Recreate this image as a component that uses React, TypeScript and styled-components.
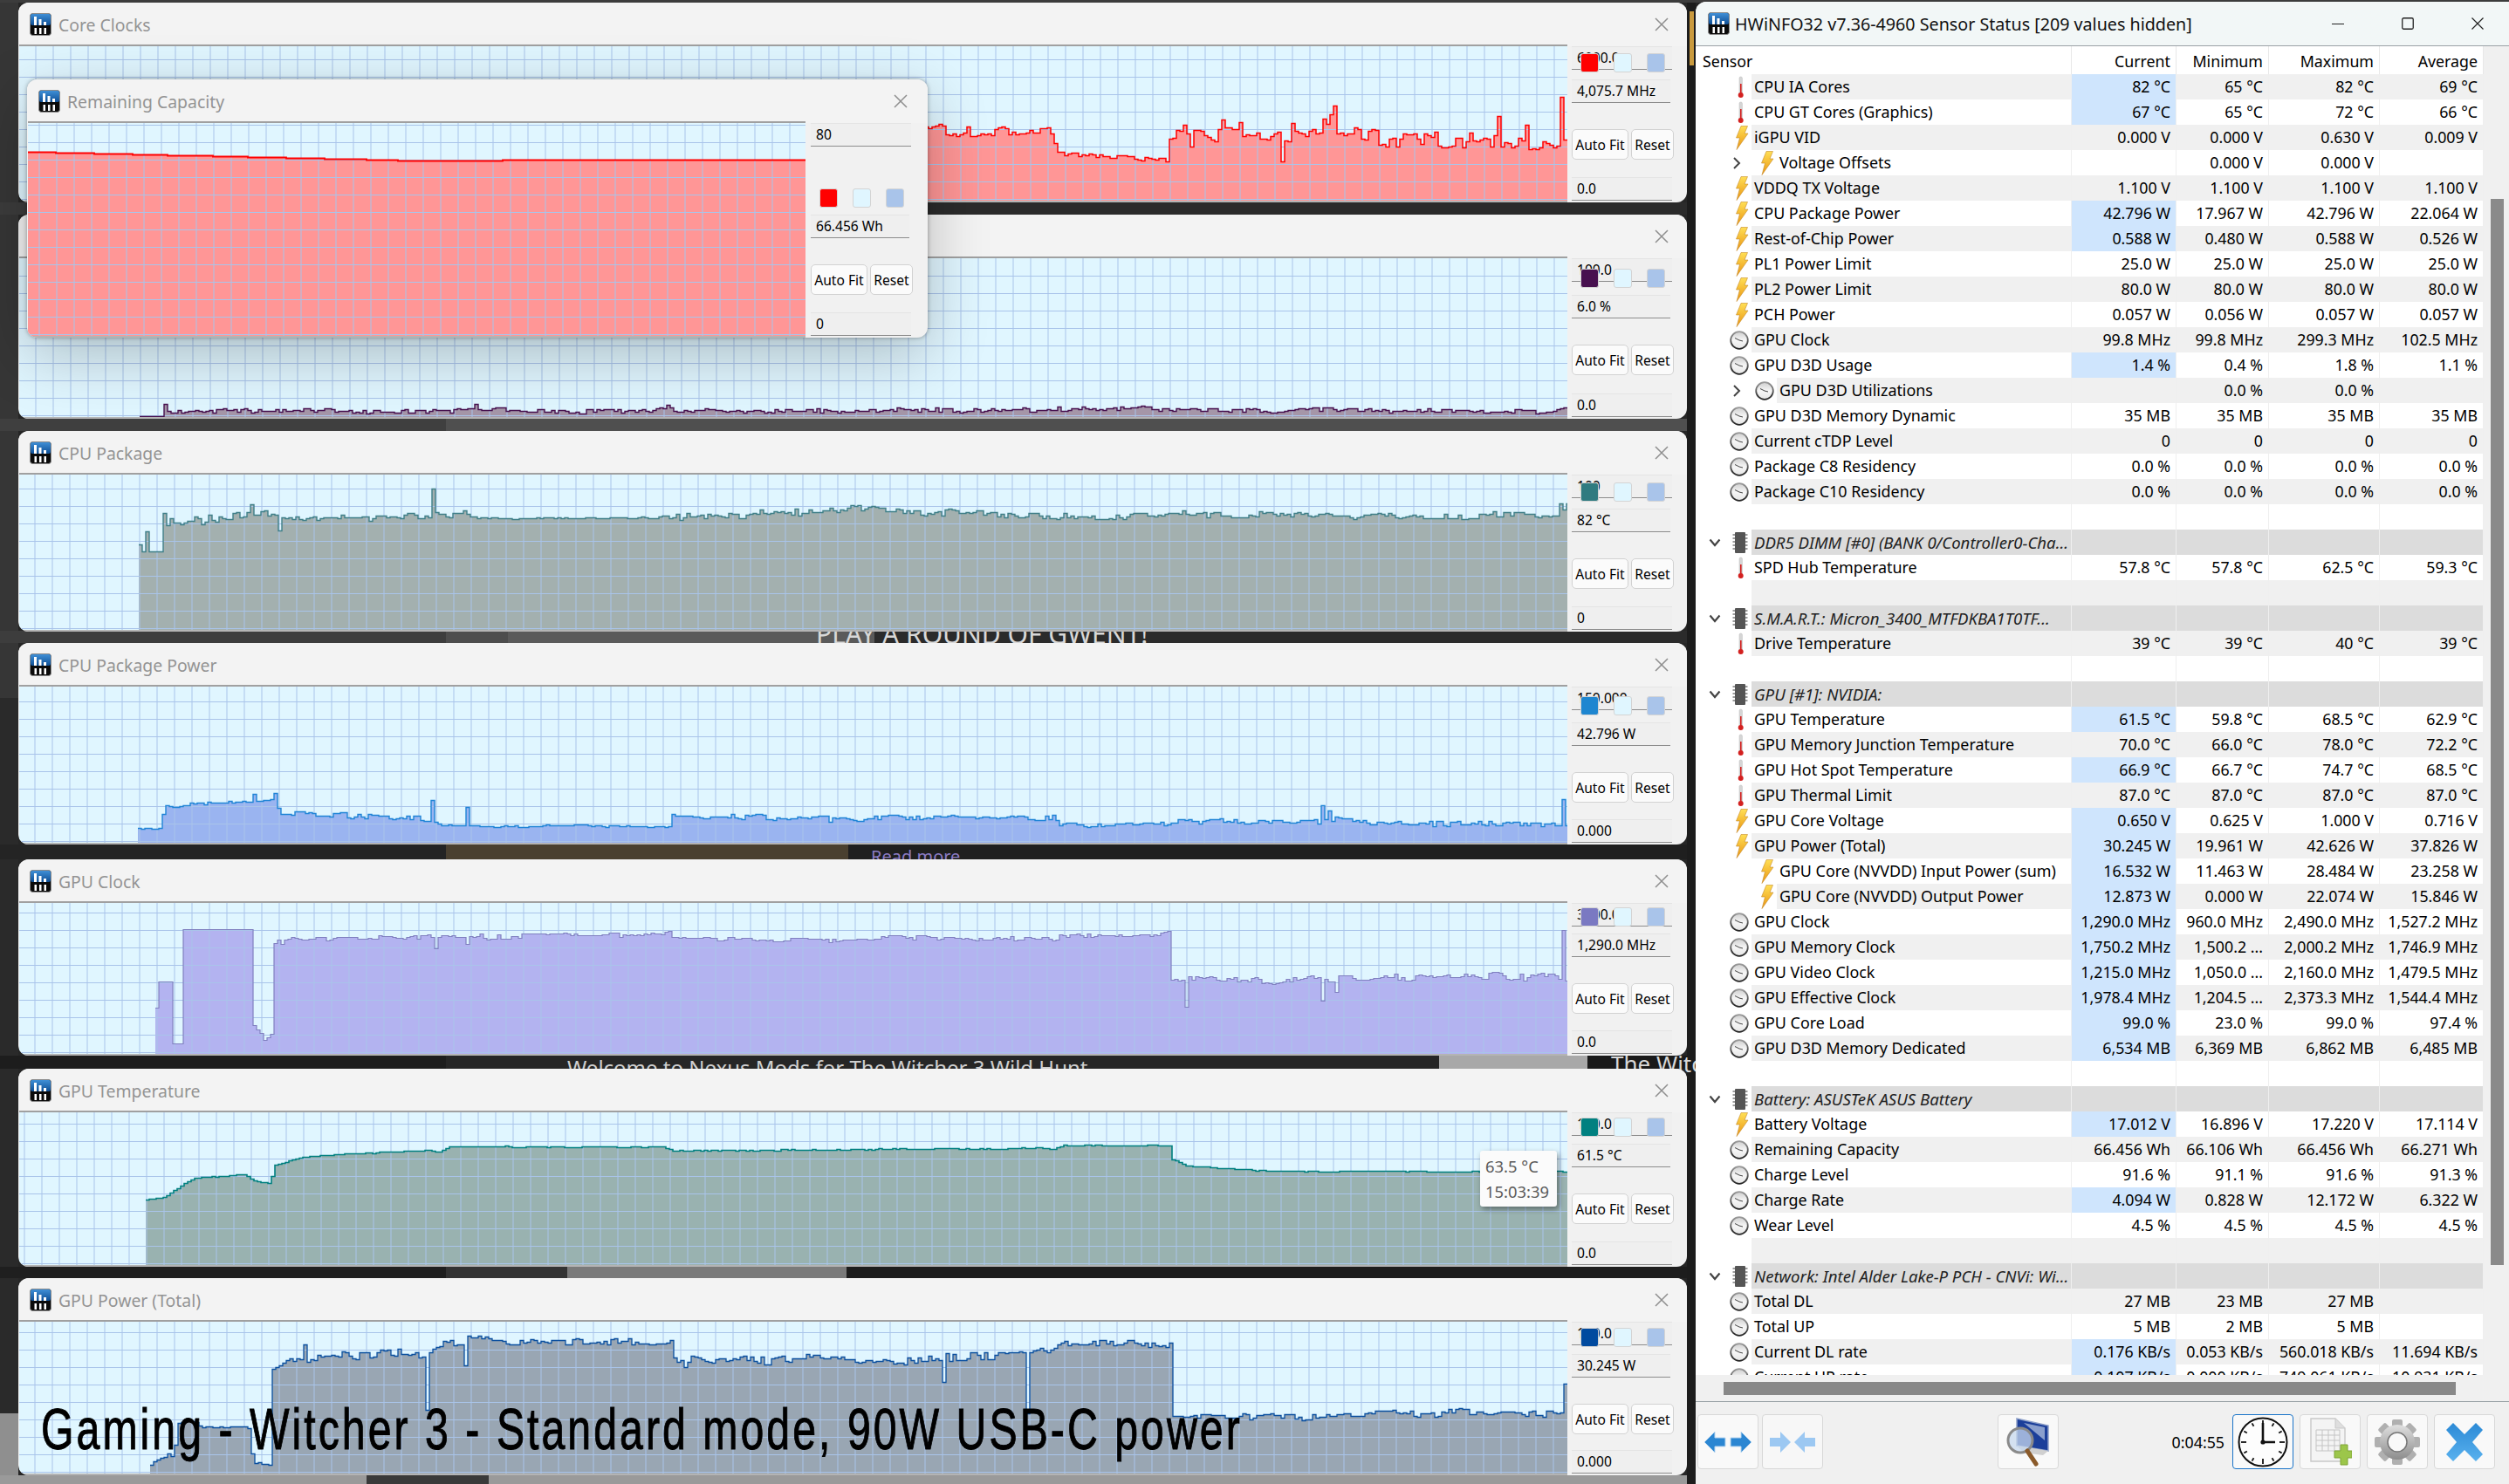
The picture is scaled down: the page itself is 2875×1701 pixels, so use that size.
import React from "react";
import styled, { createGlobalStyle } from "styled-components";

const UI = `"Noto Sans", "Liberation Sans", sans-serif`;

const block = (c: string, x: number, y: number, w: number, h: number) =>
  `linear-gradient(${c},${c}) ${x}px ${y}px / ${w}px ${h}px no-repeat`;

const backdrop = [
  block("#3c3c3c", 0, 0, 2875, 3),
  block("#c99a3e", 1936, 13, 5, 62),
  block("#3c3c3c", 0, 232, 511, 14),
  block("#2b2b2b", 511, 232, 1422, 14),
  block("#3f3f3f", 0, 480, 511, 14),
  block("#4f4f4f", 511, 480, 1422, 14),
  block("#3d3d3d", 0, 723, 511, 14),
  block("#4d4d4d", 511, 723, 71, 14),
  block("#5a5a5a", 582, 723, 420, 14),
  block("#2b2b2b", 1002, 723, 931, 14),
  block("#242424", 0, 968, 511, 17),
  block("#4a4030", 511, 968, 461, 17),
  block("#1f1f1f", 972, 968, 961, 17),
  block("#1d1d1d", 0, 1210, 511, 15),
  block("#262626", 511, 1210, 1138, 15),
  block("#a8a8a8", 1649, 1210, 170, 15),
  block("#1a1a1a", 1819, 1210, 114, 15),
  block("#1f1f1f", 0, 1452, 511, 13),
  block("#333333", 511, 1452, 139, 13),
  block("#7a7a7a", 650, 1452, 320, 13),
  block("#1d1d1d", 970, 1452, 963, 13),
  block("#3a3a3a", 420, 1691, 140, 10),
  block("#9a9a9a", 0, 1691, 1933, 10),
  block("#8f8f8f", 0, 1620, 21, 81),
  block("#2a2a2a", 0, 800, 21, 820),
  block("#363636", 0, 0, 21, 800),
  block("#1c1c1c", 1933, 0, 10, 1701),
].join(", ");

const Global = createGlobalStyle`
  html, body { margin: 0; padding: 0; background: #262626; }
  #root { width: 2875px; height: 1701px; }
`;

const Page = styled.div`
  position: relative;
  width: 2875px;
  height: 1701px;
  overflow: hidden;
  display: flex;
  align-items: flex-start;
  background: ${backdrop};
  font-family: ${UI};
  color: #000;
`;

const Behind = styled.span<{ $x: number; $y: number; $size: number; $color: string }>`
  position: absolute;
  left: ${(p) => p.$x}px;
  top: ${(p) => p.$y}px;
  font-size: ${(p) => p.$size}px;
  color: ${(p) => p.$color};
  line-height: 1;
  white-space: nowrap;
`;

const GraphColumn = styled.div`
  position: relative;
  z-index: 1;
  width: 1912px;
  margin-left: 21px;
  padding-top: 3px;
  display: flex;
  flex-direction: column;
`;

const GraphWindow = styled.section<{ $h: number; $gap: number }>`
  height: ${(p) => p.$h}px;
  margin-bottom: ${(p) => p.$gap}px;
  display: flex;
  flex-direction: column;
  background: #f1f1f1;
  border-radius: 12px;
  overflow: hidden;
`;

const FloatingWindow = styled.section`
  position: absolute;
  z-index: 2;
  left: 31px;
  top: 91px;
  width: 1032px;
  height: 296px;
  display: flex;
  flex-direction: column;
  background: #f1f1f1;
  border-radius: 12px;
  overflow: hidden;
  box-shadow: 0 20px 70px rgba(0, 0, 0, 0.24), 0 0 5px rgba(0, 0, 0, 0.35);
`;

const TitleBar = styled.header<{ $right: number }>`
  flex: 0 0 50px;
  height: 50px;
  box-sizing: border-box;
  display: flex;
  align-items: center;
  gap: 8px;
  padding: 0 ${(p) => p.$right}px 0 13px;
  background: #f3f3f3;
  font-size: 19.4px;
  color: #949494;
  white-space: nowrap;
`;

const CloseGlyph = styled.svg`
  margin-left: auto;
  width: 16px;
  height: 16px;
  flex: none;
`;

const Body = styled.div`
  flex: 1;
  min-height: 0;
  display: flex;
  align-items: stretch;
  padding-bottom: 2px;
`;

const ChartSvg = styled.svg`
  display: block;
  flex: none;
  margin-left: 1px;
  box-shadow: 0 -2px 0 #a0a0a0, 0 2px 0 #b4b4b4;
`;

const SidePanel = styled.div<{ $lead: number }>`
  flex: none;
  width: 118px;
  margin-left: ${(p) => p.$lead}px;
  display: flex;
  flex-direction: column;
  align-items: flex-start;
`;

const Field = styled.div<{ $w?: number; $top?: number; $auto?: boolean }>`
  width: ${(p) => p.$w ?? 115}px;
  height: 27px;
  flex: none;
  box-sizing: border-box;
  margin-top: ${(p) => (p.$auto ? "auto" : `${p.$top ?? 0}px`)};
  padding-left: 6px;
  background: #efefef;
  border-top: 1px solid #e4e4e4;
  border-bottom: 1px solid #8c8c8c;
  font-size: 15.6px;
  line-height: 25px;
  white-space: nowrap;
  overflow: hidden;
`;

const Swatches = styled.div<{ $top: number }>`
  position: relative;
  margin-top: ${(p) => p.$top}px;
  margin-left: 10px;
  display: flex;
  gap: 17px;
  flex: none;
`;

const Swatch = styled.i<{ $c: string }>`
  display: block;
  width: 19px;
  height: 20px;
  background: ${(p) => p.$c};
  border: 1px solid #d4d4d4;
  border-radius: 3px;
`;

const ButtonRow = styled.div<{ $top: number }>`
  display: flex;
  gap: 3px;
  margin-top: ${(p) => p.$top}px;
  flex: none;
`;

const FitButton = styled.button<{ $w: number }>`
  width: ${(p) => p.$w}px;
  height: 35px;
  padding: 0;
  box-sizing: border-box;
  background: #fbfbfb;
  border: 1px solid #d2d2d2;
  border-radius: 5px;
  font-family: ${UI};
  font-size: 15.6px;
  color: #000;
`;

const Tip = styled.div`
  position: absolute;
  z-index: 3;
  left: 1696px;
  top: 1319px;
  width: 88px;
  height: 64px;
  box-sizing: border-box;
  padding: 3px 0 0 6px;
  background: #fbfbfb;
  border-radius: 3px;
  box-shadow: 2px 3px 6px rgba(0, 0, 0, 0.4);
  color: #5a5a5a;
  font-size: 18.4px;
  line-height: 29px;
`;

const Caption = styled.div`
  position: absolute;
  z-index: 4;
  left: 47px;
  top: 1600px;
  font-family: "Liberation Sans", sans-serif;
  font-size: 67px;
  line-height: 75px;
  letter-spacing: 4.2px;
  color: #000;
  -webkit-text-stroke: 1px #000;
  white-space: nowrap;
  transform-origin: left top;
  transform: scaleX(0.72);
`;

/* ---------- sensor window ---------- */

const SensorWindow = styled.section`
  position: relative;
  z-index: 1;
  margin-left: 10px;
  margin-top: 2px;
  width: 932px;
  height: 1699px;
  display: flex;
  flex-direction: column;
  background: #f0f0f0;
  border-radius: 12px 0 0 0;
  overflow: hidden;
`;

const SensorTitle = styled.header`
  flex: 0 0 51px;
  box-sizing: border-box;
  display: flex;
  align-items: center;
  padding-left: 14px;
  gap: 6px;
  background: #f2f7f7;
  border-bottom: 1px solid #9aa2a6;
  font-size: 19.7px;
  color: #111;
  white-space: nowrap;
`;

const WindowControls = styled.div`
  margin-left: auto;
  display: flex;
  gap: 66px;
  padding-right: 29px;
  align-items: center;
`;

const TableArea = styled.div`
  flex: none;
  height: 1523px;
  display: flex;
`;

const Table = styled.div`
  width: 903px;
  background: #fff;
  overflow: hidden;
  flex: none;
`;

const HeaderRow = styled.div`
  height: 32px;
  display: grid;
  grid-template-columns: 431px 120px 106px 127px 119px;
  font-size: 17.8px;
  line-height: 34px;
`;

const HeaderCell = styled.div<{ $left?: boolean }>`
  box-sizing: border-box;
  padding: ${(p) => (p.$left ? "0 0 0 8px" : "0 6px 0 0")};
  text-align: ${(p) => (p.$left ? "left" : "right")};
  border-right: 1px solid #e8e8e8;
`;

const Row = styled.div`
  height: 29px;
  display: grid;
  grid-template-columns: 431px 120px 106px 127px 119px;
  font-size: 17.8px;
  line-height: 29px;
`;

const toneColor = { white: "#ffffff", gray: "#f0f0f0", group: "#dcdcdc" };
type Tone = keyof typeof toneColor;

const NameCell = styled.div`
  display: flex;
  min-width: 0;
  white-space: nowrap;
`;

const Gutter = styled.div<{ $w: number; $pad: number }>`
  flex: none;
  width: ${(p) => p.$w}px;
  box-sizing: border-box;
  padding-left: ${(p) => p.$pad}px;
  padding-right: 3px;
  display: flex;
  align-items: center;
  justify-content: space-between;
  background: #fff;
`;

const Name = styled.div<{ $tone: Tone }>`
  flex: 1;
  min-width: 0;
  padding-left: 3px;
  background: ${(p) => toneColor[p.$tone]};
  font-style: ${(p) => (p.$tone === "group" ? "italic" : "normal")};
  font-size: ${(p) => (p.$tone === "group" ? "18.6px" : "17.9px")};
  color: ${(p) => (p.$tone === "group" ? "#222" : "#000")};
  border-right: 1px solid #efefef;
  overflow: hidden;
`;

const Value = styled.div<{ $tone: Tone; $hl?: boolean }>`
  box-sizing: border-box;
  text-align: right;
  padding-right: 6px;
  white-space: nowrap;
  overflow: hidden;
  background: ${(p) => (p.$hl ? "#cfe5fd" : toneColor[p.$tone])};
  border-right: 1px solid #efefef;
`;

const ScrollTrack = styled.div`
  flex: 1;
  padding: 175px 6px 0 8px;
  background: #f0f0f0;
`;

const ScrollThumb = styled.div`
  height: 1222px;
  background: #8a8a8a;
`;

const HScroll = styled.div`
  flex: none;
  height: 31px;
  box-sizing: border-box;
  padding: 8px 0 0 32px;
  border-bottom: 1px solid #9aa2a6;
`;

const HThumb = styled.div`
  width: 839px;
  height: 15px;
  background: #888;
`;

const Footer = styled.footer`
  flex: none;
  display: flex;
  align-items: center;
  padding: 14px 16px 0 2px;
  gap: 4px;
`;

const ToolButton = styled.div<{ $focus?: boolean; $faded?: boolean; $lead?: number }>`
  width: 70px;
  height: 63px;
  flex: none;
  box-sizing: border-box;
  margin-left: ${(p) => p.$lead ?? 0}px;
  display: flex;
  align-items: center;
  justify-content: center;
  background: ${(p) => (p.$faded ? "#f7f7f7" : "#f9f9f9")};
  border: 1px solid ${(p) => (p.$focus ? "#1a74c8" : "#d8d8d8")};
  border-radius: 4px;
`;

const ToolRight = styled.div`
  margin-left: auto;
  display: flex;
  align-items: center;
  gap: 7px;
`;

const Elapsed = styled.span`
  font-size: 17.8px;
  margin-right: 2px;
`;

/* ---------- icons ---------- */

const AppIcon = () => (
  <svg width="25" height="26" viewBox="0 0 25 26" style={{ flex: "none" }}>
    <defs>
      <linearGradient id="appTop" x1="0" y1="0" x2="0" y2="1">
        <stop offset="0" stopColor="#3f8fd6" />
        <stop offset="1" stopColor="#0f4f95" />
      </linearGradient>
    </defs>
    <rect x="0.5" y="0.5" width="24" height="25" rx="3" fill="#0a0a0a" stroke="#8a8a8a" />
    <rect x="1" y="1" width="23" height="13" rx="2" fill="url(#appTop)" />
    <rect x="5" y="4" width="3" height="10" fill="#fff" />
    <rect x="10.5" y="7" width="3" height="7" fill="#fff" />
    <rect x="16" y="10" width="3" height="4" fill="#fff" />
    <rect x="5.5" y="17" width="2.5" height="7" fill="#fff" />
    <rect x="11" y="17" width="2.5" height="7" fill="#fff" />
    <rect x="16.5" y="17" width="2.5" height="7" fill="#fff" />
  </svg>
);

const CloseX = ({ c = "#8e8e8e" }: { c?: string }) => (
  <CloseGlyph viewBox="0 0 16 16">
    <path d="M1 1L15 15M15 1L1 15" stroke={c} strokeWidth="1.5" />
  </CloseGlyph>
);

const Thermo = () => (
  <svg width="20" height="26" viewBox="0 0 20 26">
    <rect x="9" y="1" width="3.4" height="21" rx="1.6" fill="#d6d6d6" stroke="#b8b8b8" strokeWidth="0.5" />
    <rect x="10" y="9" width="1.6" height="13" fill="#d3201f" />
    <circle cx="10.7" cy="22" r="3" fill="#d3201f" />
  </svg>
);

const Bolt = () => (
  <svg width="18" height="28" viewBox="0 0 18 28">
    <defs>
      <linearGradient id="boltFill" x1="0" y1="0" x2="0" y2="1">
        <stop offset="0" stopColor="#ffdf55" />
        <stop offset="1" stopColor="#ea9412" />
      </linearGradient>
    </defs>
    <path d="M9 0.5H16.5L13 9H17L4 27.5L7.5 14H3.5Z" fill="url(#boltFill)" stroke="#c48a2a" strokeWidth="0.6" />
  </svg>
);

const ClockIcon = () => (
  <svg width="22" height="24" viewBox="0 0 22 24">
    <defs>
      <linearGradient id="clockFace" x1="0" y1="0" x2="0" y2="1">
        <stop offset="0" stopColor="#cfcfcf" />
        <stop offset="0.5" stopColor="#f6f6f6" />
        <stop offset="1" stopColor="#e6e6e6" />
      </linearGradient>
      <linearGradient id="clockRing" x1="0" y1="0" x2="0" y2="1">
        <stop offset="0" stopColor="#9a9a9a" />
        <stop offset="1" stopColor="#222222" />
      </linearGradient>
    </defs>
    <circle cx="11" cy="12" r="9.8" fill="url(#clockFace)" stroke="url(#clockRing)" strokeWidth="1.8" />
    <path d="M11 12L6 9.5M11 12L15 13" stroke="#444" strokeWidth="1" />
  </svg>
);

const ChipIcon = () => (
  <svg width="20" height="26" viewBox="0 0 20 26">
    <rect x="4" y="1" width="12" height="24" rx="1" fill="#555" />
    {[3, 7, 11, 15, 19].map((y) => (
      <g key={y}>
        <rect x="1.5" y={y} width="2.5" height="2" fill="#9a9a9a" />
        <rect x="16" y={y} width="2.5" height="2" fill="#9a9a9a" />
      </g>
    ))}
  </svg>
);

const ChevDown = () => (
  <svg width="14" height="10" viewBox="0 0 14 10">
    <path d="M1.5 1.5L7 8L12.5 1.5" fill="none" stroke="#444" strokeWidth="2.2" />
  </svg>
);

const ChevRight = () => (
  <svg width="10" height="14" viewBox="0 0 10 14">
    <path d="M2 1L8 7L2 13" fill="none" stroke="#444" strokeWidth="2" />
  </svg>
);

const Arrows = ({ out }: { out: boolean }) => {
  const a = out ? "#2b86d2" : "#9cc8f2";
  return (
    <svg width="56" height="30" viewBox="0 0 56 30">
      {out ? (
        <>
          <path d="M1 15L13 3V10H25V20H13V27Z" fill={a} stroke="#bcd8f0" />
          <path d="M55 15L43 3V10H31V20H43V27Z" fill={a} stroke="#bcd8f0" />
        </>
      ) : (
        <>
          <path d="M26 15L14 3V10H2V20H14V27Z" fill={a} />
          <path d="M30 15L42 3V10H54V20H42V27Z" fill={a} />
        </>
      )}
    </svg>
  );
};

const ScanIcon = () => (
  <svg width="54" height="56" viewBox="0 0 54 56">
    <path d="M14 1L50 9V38L14 32Z" fill="#1c3f9a" stroke="#8ea0c8" strokeWidth="1.5" />
    <path d="M22 6L46 11V26Z" fill="#e6eef8" opacity="0.55" />
    <path d="M14 32L50 38L44 43L22 40Z" fill="#d0d0d0" />
    <circle cx="18" cy="26" r="14" fill="#c7d8ee" fillOpacity="0.75" stroke="#8a8a8a" strokeWidth="3" />
    <path d="M26 38L36 53" stroke="#8a5a2a" strokeWidth="5" strokeLinecap="round" />
  </svg>
);

const BigClock = () => (
  <svg width="58" height="58" viewBox="0 0 58 58">
    <circle cx="29" cy="29" r="27.5" fill="#fdfdfd" stroke="#111" strokeWidth="2" />
    {Array.from({ length: 12 }, (_, i) => {
      const t = (i * Math.PI) / 6;
      const l = i % 3 === 0 ? 19 : 21;
      return (
        <line
          key={i}
          x1={29 + l * Math.sin(t)}
          y1={29 - l * Math.cos(t)}
          x2={29 + 25 * Math.sin(t)}
          y2={29 - 25 * Math.cos(t)}
          stroke="#111"
          strokeWidth="1.8"
        />
      );
    })}
    <path d="M29 29V7M29 29H43" stroke="#111" strokeWidth="2.6" />
    <circle cx="29" cy="29" r="2.6" fill="#111" />
  </svg>
);

const SheetIcon = () => (
  <svg width="50" height="56" viewBox="0 0 50 56">
    <path d="M3 1H31L42 12V50H3Z" fill="#f4f4f4" stroke="#c8c8c8" strokeWidth="1.4" />
    <path d="M31 1V12H42" fill="#dedede" stroke="#c8c8c8" />
    {[14, 20, 26, 32, 38].map((y) => (
      <line key={y} x1="9" x2="36" y1={y} y2={y} stroke="#c4c4c4" />
    ))}
    {[9, 16, 23, 30, 36].map((x) => (
      <line key={x} x1={x} x2={x} y1="14" y2="38" stroke="#c4c4c4" />
    ))}
    <path d="M30 38H37V31H45V38H50V46H45V54H37V46H30Z" fill="#9cc64a" stroke="#7ea534" />
  </svg>
);

const Gear = () => {
  const teeth = Array.from({ length: 8 }, (_, i) => i * 45);
  return (
    <svg width="54" height="56" viewBox="0 0 54 56">
      <defs>
        <linearGradient id="gearFill" x1="0" y1="0" x2="0" y2="1">
          <stop offset="0" stopColor="#e0e0e0" />
          <stop offset="1" stopColor="#8c8c8c" />
        </linearGradient>
      </defs>
      {teeth.map((a) => (
        <rect key={a} x="21" y="2" width="12" height="12" rx="2" fill="#b0b0b0" transform={`rotate(${a} 27 28)`} />
      ))}
      <circle cx="27" cy="28" r="20" fill="url(#gearFill)" />
      <circle cx="27" cy="28" r="11" fill="#f9f9f9" stroke="#777" strokeWidth="1.5" />
    </svg>
  );
};

const BlueX = () => (
  <svg width="44" height="46" viewBox="0 0 44 46">
    <defs>
      <linearGradient id="xFill" x1="0" y1="0" x2="0" y2="1">
        <stop offset="0" stopColor="#2c8ad6" />
        <stop offset="1" stopColor="#59b1ee" />
      </linearGradient>
    </defs>
    <path d="M9 1L22 14L35 1L43 9L31 23L43 37L35 45L22 32L9 45L1 37L13 23L1 9Z" fill="url(#xFill)" />
  </svg>
);

/* ---------- graphs ---------- */

type Key = [number, number, number?];

const makeRng = (seed: number) => {
  let s = seed;
  return () => {
    s = (s * 16807) % 2147483647;
    return s / 2147483647;
  };
};

const levelAt = (keys: Key[], x: number): [number, number] => {
  for (let i = 0; i < keys.length - 1; i++) {
    const [x0, y0, n0] = keys[i];
    const [x1, y1] = keys[i + 1];
    if (x >= x0 && x <= x1) {
      const t = x1 === x0 ? 0 : (x - x0) / (x1 - x0);
      return [y0 + (y1 - y0) * t, n0 ?? 0];
    }
  }
  const last = keys[keys.length - 1];
  return [last[1], last[2] ?? 0];
};

type ChartProps = {
  x0: number;
  y0: number;
  w: number;
  h: number;
  phase: number;
  line: string;
  fill: string;
  stroke: number;
  keys: Key[];
  seed: number;
  step?: number;
  spikes?: [number, number][];
};

const Chart = ({ x0, y0, w, h, phase, line, fill, stroke, keys, seed, step = 4, spikes = [] }: ChartProps) => {
  const rng = makeRng(seed);
  const start = keys[0][0];
  const end = keys[keys.length - 1][0];
  let d = "";
  let first = 0;
  let jitter = 0;
  let wander = 0;
  for (let x = start; x < end; x += step) {
    const [lvl, amp] = levelAt(keys, x + step / 2);
    const hold = rng() < 0.3;
    if (!hold) jitter = (rng() - 0.5) * 2 * amp;
    wander = wander * 0.94 + (rng() - 0.5) * amp * 0.5;
    let y = lvl + jitter + wander;
    const hit = spikes.find(([sx]) => sx >= x && sx < x + step);
    if (hit) y = hit[1];
    const px = x - x0;
    const py = Math.round(y - y0) + 0.5;
    if (!d) {
      d = `M${px} ${py}`;
      first = px;
    } else {
      d += `V${py}`;
    }
    d += `H${Math.min(px + step, w)}`;
  }
  const area = `M${first} ${h}V${d.slice(d.indexOf(" ") + 1).split("H")[0]}` + d.slice(d.indexOf("H"));
  const grid: string[] = [];
  for (let gx = phase; gx < w; gx += 20) grid.push(`M${gx + 0.5} 0V${h}`);
  for (let gy = h - 2; gy > 0; gy -= 20) grid.push(`M0 ${gy + 0.5}H${w}`);
  return (
    <ChartSvg width={w} height={h} viewBox={`0 0 ${w} ${h}`}>
      <rect width={w} height={h} fill="#e0f6ff" />
      <path d={`${area}V${h}H${first}Z`} fill={fill} />
      <path d={grid.join("")} stroke="#a9c4ea" strokeWidth="1" fill="none" />
      <path d={d} stroke={line} strokeWidth={stroke} fill="none" />
    </ChartSvg>
  );
};

type Graph = {
  title: string;
  h: number;
  gap: number;
  chartTop: number;
  phase: number;
  line: string;
  fill: string;
  swatch: string;
  stroke: number;
  keys: Key[];
  swatchTop: number;
  spikes?: [number, number][];
  step?: number;
  max: string;
  cur: string;
  min: string;
};

const graphs: Graph[] = [
  {
    title: "Core Clocks",
    h: 229,
    gap: 14,
    chartTop: 52,
    phase: 18.5,
    line: "#ff0000",
    fill: "#ff9696",
    swatch: "#ff0000",
    stroke: 1.5,
    swatchTop: -19,
    max: "6000.0",
    cur: "4,075.7 MHz",
    min: "0.0",
    keys: [
      [160, 150, 7],
      [1204, 150, 7],
      [1214, 176, 3],
      [1340, 182, 2],
      [1342, 157, 9],
      [1500, 156, 10],
      [1530, 148, 12],
      [1560, 152, 10],
      [1793, 156, 9],
      [1796, 156, 9],
    ],
    spikes: [
      [1358, 142],
      [1366, 167],
      [1402, 136],
      [1420, 139],
      [1482, 140],
      [1470, 184],
      [1516, 135],
      [1530, 120],
      [1524, 130],
      [1718, 132],
      [1750, 142],
      [1790, 110],
    ],
  },
  {
    title: "",
    h: 234,
    gap: 14,
    chartTop: 296,
    phase: 18.5,
    line: "#47104f",
    fill: "#a596a8",
    swatch: "#47104f",
    stroke: 1.4,
    swatchTop: -15,
    max: "100.0",
    cur: "6.0 %",
    min: "0.0",
    keys: [
      [160, 477],
      [187, 477],
      [188, 470, 2.5],
      [1796, 470, 2.5],
    ],
    spikes: [
      [190, 463],
      [545, 463],
      [767, 464],
    ],
  },
  {
    title: "CPU Package",
    h: 230,
    gap: 13,
    chartTop: 544,
    phase: 17.5,
    line: "#3f7f88",
    fill: "#a3b0af",
    swatch: "#2f7b80",
    stroke: 1.4,
    swatchTop: -18,
    max: "100",
    cur: "82 °C",
    min: "0",
    keys: [
      [159, 616],
      [163, 632, 0],
      [186, 632, 0],
      [188, 600, 6],
      [210, 600, 6],
      [268, 593, 5],
      [400, 592, 3.5],
      [490, 591, 4],
      [530, 595, 1],
      [760, 593, 4.5],
      [950, 587, 4],
      [1300, 592, 3.5],
      [1790, 591, 3.5],
      [1796, 577, 0],
    ],
    spikes: [
      [170, 609],
      [188, 588],
      [288, 578],
      [305, 585],
      [497, 560],
      [531, 585],
      [321, 608],
      [1790, 577],
    ],
  },
  {
    title: "CPU Package Power",
    h: 231,
    gap: 17,
    chartTop: 788,
    phase: 17.5,
    line: "#1f84d6",
    fill: "#9ab4f0",
    swatch: "#1e86d0",
    stroke: 1.4,
    swatchTop: -16,
    max: "150.000",
    cur: "42.796 W",
    min: "0.000",
    keys: [
      [158, 950, 1],
      [184, 950, 1],
      [190, 926, 2],
      [208, 923, 1.5],
      [300, 918, 3],
      [318, 918, 3],
      [322, 936, 3.5],
      [490, 938, 3.5],
      [500, 940, 3],
      [516, 948, 1],
      [769, 948, 1],
      [770, 935, 2.5],
      [825, 937, 3],
      [1209, 939, 3],
      [1215, 947, 2],
      [1350, 947, 2],
      [1352, 943, 3],
      [1505, 942, 3.5],
      [1530, 940, 3.5],
      [1560, 944, 3],
      [1796, 945, 3],
    ],
    spikes: [
      [292, 911],
      [316, 910],
      [497, 918],
      [534, 926],
      [1514, 924],
      [1522, 930],
      [1793, 917],
    ],
  },
  {
    title: "GPU Clock",
    h: 225,
    gap: 15,
    chartTop: 1034,
    phase: 17.5,
    line: "#8080c0",
    fill: "#b3b3f0",
    swatch: "#7a79c2",
    stroke: 1.2,
    swatchTop: -22,
    max: "3000.0",
    cur: "1,290.0 MHz",
    min: "0.0",
    keys: [
      [178, 1184],
      [182, 1124],
      [198, 1124],
      [200, 1195],
      [208, 1195],
      [209, 1064],
      [288, 1064],
      [289, 1172, 5],
      [304, 1190, 6],
      [314, 1180, 5],
      [315, 1078, 3],
      [340, 1073, 3],
      [770, 1070, 2.5],
      [772, 1076, 2.5],
      [1210, 1074, 2.5],
      [1220, 1070, 2.5],
      [1342, 1070, 2],
      [1344, 1121, 3.5],
      [1500, 1121, 4],
      [1600, 1118, 4.5],
      [1796, 1118, 4.5],
    ],
    spikes: [
      [200, 1195],
      [499, 1086],
      [534, 1081],
      [1359, 1153],
      [1514, 1146],
      [1530, 1136],
      [1793, 1065],
    ],
  },
  {
    title: "GPU Temperature",
    h: 227,
    gap: 13,
    chartTop: 1275,
    phase: 5.5,
    line: "#008080",
    fill: "#99b2b0",
    swatch: "#008080",
    stroke: 1.6,
    swatchTop: -21,
    max: "100.0",
    cur: "61.5 °C",
    min: "0.0",
    keys: [
      [167, 1375, 0.4],
      [190, 1372, 0.4],
      [211, 1357, 0.5],
      [225, 1350, 0.5],
      [282, 1346, 0.4],
      [290, 1352, 0.4],
      [311, 1357, 0.4],
      [316, 1335, 0.5],
      [352, 1325, 0.6],
      [493, 1318, 0.7],
      [505, 1321, 0.7],
      [516, 1314, 0.7],
      [763, 1314, 0.7],
      [772, 1319, 0.7],
      [1209, 1316, 0.7],
      [1221, 1313, 0.7],
      [1342, 1313, 0.7],
      [1344, 1328, 0.4],
      [1361, 1336, 0.4],
      [1455, 1342, 0.5],
      [1526, 1343, 0.5],
      [1555, 1342, 0.5],
      [1796, 1343, 0.5],
    ],
  },
  {
    title: "GPU Power (Total)",
    h: 226,
    gap: 0,
    chartTop: 1515,
    phase: 17.5,
    line: "#0a4f9f",
    fill: "#99a6b3",
    swatch: "#004a9f",
    stroke: 1.3,
    swatchTop: -20,
    max: "100.0",
    cur: "30.245 W",
    min: "0.000",
    keys: [
      [172, 1680, 1],
      [180, 1672, 3],
      [200, 1665, 4],
      [206, 1632, 3],
      [218, 1628, 2],
      [240, 1636, 1.5],
      [287, 1636, 1],
      [291, 1676, 2],
      [311, 1678, 2],
      [313, 1568, 2],
      [335, 1557, 5],
      [488, 1552, 5],
      [507, 1541, 5],
      [550, 1536, 4],
      [770, 1537, 4],
      [775, 1557, 4],
      [860, 1555, 4.5],
      [1177, 1552, 4.5],
      [1206, 1545, 4],
      [1222, 1540, 4],
      [1342, 1540, 4.5],
      [1344, 1623, 3.5],
      [1796, 1620, 4],
    ],
    spikes: [
      [351, 1541],
      [488, 1616],
      [533, 1565],
      [785, 1567],
      [1081, 1584],
      [1179, 1620],
      [1793, 1586],
    ],
  },
];

const Side = ({ g, lead, swatchTop }: { g: Pick<Graph, "max" | "cur" | "min" | "swatch">; lead: number; swatchTop: number }) => (
  <SidePanel $lead={lead}>
    <Field>{g.max}</Field>
    <Swatches $top={swatchTop}>
      <Swatch $c={g.swatch} />
      <Swatch $c="#e0f6ff" />
      <Swatch $c="#a9c4ea" />
    </Swatches>
    <Field $w={113} $top={8}>{g.cur}</Field>
    <ButtonRow $top={30}>
      <FitButton $w={65}>Auto Fit</FitButton>
      <FitButton $w={49}>Reset</FitButton>
    </ButtonRow>
    <Field $auto>{g.min}</Field>
  </SidePanel>
);

/* ---------- sensors ---------- */

type IconKind = "t" | "v" | "c";
type Sensor =
  | { k: "blank" }
  | { k: "group"; name: string }
  | {
      k: "row";
      name: string;
      icon: IconKind;
      vals: [string, string, string, string];
      hl?: boolean;
      sub?: "leaf" | "open";
    };

const s = (
  name: string,
  icon: IconKind,
  vals: [string, string, string, string],
  hl = false,
  sub?: "leaf" | "open"
): Sensor => ({ k: "row", name, icon, vals, hl, sub });
const same = (v: string): [string, string, string, string] => [v, v, v, v];
const blank: Sensor = { k: "blank" };
const group = (name: string): Sensor => ({ k: "group", name });

const sensors: Sensor[] = [
  s("CPU IA Cores", "t", ["82 °C", "65 °C", "82 °C", "69 °C"], true),
  s("CPU GT Cores (Graphics)", "t", ["67 °C", "65 °C", "72 °C", "66 °C"], true),
  s("iGPU VID", "v", ["0.000 V", "0.000 V", "0.630 V", "0.009 V"]),
  s("Voltage Offsets", "v", ["", "0.000 V", "0.000 V", ""], false, "open"),
  s("VDDQ TX Voltage", "v", same("1.100 V")),
  s("CPU Package Power", "v", ["42.796 W", "17.967 W", "42.796 W", "22.064 W"], true),
  s("Rest-of-Chip Power", "v", ["0.588 W", "0.480 W", "0.588 W", "0.526 W"], true),
  s("PL1 Power Limit", "v", same("25.0 W")),
  s("PL2 Power Limit", "v", same("80.0 W")),
  s("PCH Power", "v", ["0.057 W", "0.056 W", "0.057 W", "0.057 W"]),
  s("GPU Clock", "c", ["99.8 MHz", "99.8 MHz", "299.3 MHz", "102.5 MHz"]),
  s("GPU D3D Usage", "c", ["1.4 %", "0.4 %", "1.8 %", "1.1 %"], true),
  s("GPU D3D Utilizations", "c", ["", "0.0 %", "0.0 %", ""], false, "open"),
  s("GPU D3D Memory Dynamic", "c", same("35 MB")),
  s("Current cTDP Level", "c", same("0")),
  s("Package C8 Residency", "c", same("0.0 %")),
  s("Package C10 Residency", "c", same("0.0 %")),
  blank,
  group("DDR5 DIMM [#0] (BANK 0/Controller0-Cha..."),
  s("SPD Hub Temperature", "t", ["57.8 °C", "57.8 °C", "62.5 °C", "59.3 °C"]),
  blank,
  group("S.M.A.R.T.: Micron_3400_MTFDKBA1T0TF..."),
  s("Drive Temperature", "t", ["39 °C", "39 °C", "40 °C", "39 °C"]),
  blank,
  group("GPU [#1]: NVIDIA:"),
  s("GPU Temperature", "t", ["61.5 °C", "59.8 °C", "68.5 °C", "62.9 °C"], true),
  s("GPU Memory Junction Temperature", "t", ["70.0 °C", "66.0 °C", "78.0 °C", "72.2 °C"]),
  s("GPU Hot Spot Temperature", "t", ["66.9 °C", "66.7 °C", "74.7 °C", "68.5 °C"], true),
  s("GPU Thermal Limit", "t", same("87.0 °C")),
  s("GPU Core Voltage", "v", ["0.650 V", "0.625 V", "1.000 V", "0.716 V"], true),
  s("GPU Power (Total)", "v", ["30.245 W", "19.961 W", "42.626 W", "37.826 W"], true),
  s("GPU Core (NVVDD) Input Power (sum)", "v", ["16.532 W", "11.463 W", "28.484 W", "23.258 W"], true, "leaf"),
  s("GPU Core (NVVDD) Output Power", "v", ["12.873 W", "0.000 W", "22.074 W", "15.846 W"], true, "leaf"),
  s("GPU Clock", "c", ["1,290.0 MHz", "960.0 MHz", "2,490.0 MHz", "1,527.2 MHz"], true),
  s("GPU Memory Clock", "c", ["1,750.2 MHz", "1,500.2 ...", "2,000.2 MHz", "1,746.9 MHz"], true),
  s("GPU Video Clock", "c", ["1,215.0 MHz", "1,050.0 ...", "2,160.0 MHz", "1,479.5 MHz"], true),
  s("GPU Effective Clock", "c", ["1,978.4 MHz", "1,204.5 ...", "2,373.3 MHz", "1,544.4 MHz"], true),
  s("GPU Core Load", "c", ["99.0 %", "23.0 %", "99.0 %", "97.4 %"], true),
  s("GPU D3D Memory Dedicated", "c", ["6,534 MB", "6,369 MB", "6,862 MB", "6,485 MB"], true),
  blank,
  group("Battery: ASUSTeK ASUS Battery"),
  s("Battery Voltage", "v", ["17.012 V", "16.896 V", "17.220 V", "17.114 V"], true),
  s("Remaining Capacity", "c", ["66.456 Wh", "66.106 Wh", "66.456 Wh", "66.271 Wh"]),
  s("Charge Level", "c", ["91.6 %", "91.1 %", "91.6 %", "91.3 %"]),
  s("Charge Rate", "c", ["4.094 W", "0.828 W", "12.172 W", "6.322 W"], true),
  s("Wear Level", "c", same("4.5 %")),
  blank,
  group("Network: Intel Alder Lake-P PCH - CNVi: Wi..."),
  s("Total DL", "c", ["27 MB", "23 MB", "27 MB", ""]),
  s("Total UP", "c", ["5 MB", "2 MB", "5 MB", ""]),
  s("Current DL rate", "c", ["0.176 KB/s", "0.053 KB/s", "560.018 KB/s", "11.694 KB/s"], true),
  s("Current UP rate", "c", ["0.107 KB/s", "0.000 KB/s", "749.061 KB/s", "10.931 KB/s"], true),
];

const iconFor = (k: IconKind) => (k === "t" ? <Thermo /> : k === "v" ? <Bolt /> : <ClockIcon />);

const SensorRow = ({ item, index }: { item: Sensor; index: number }) => {
  if (item.k === "group") {
    return (
      <Row>
        <NameCell>
          <Gutter $w={64} $pad={15}>
            <ChevDown />
            <ChipIcon />
          </Gutter>
          <Name $tone="group">{item.name}</Name>
        </NameCell>
        {[0, 1, 2, 3].map((i) => (
          <Value key={i} $tone="group" />
        ))}
      </Row>
    );
  }
  const tone: Tone = index % 2 === 0 ? "gray" : "white";
  if (item.k === "blank") {
    return (
      <Row>
        <NameCell>
          <Gutter $w={64} $pad={0} />
          <Name $tone={tone} />
        </NameCell>
        {[0, 1, 2, 3].map((i) => (
          <Value key={i} $tone={tone} />
        ))}
      </Row>
    );
  }
  const indented = !!item.sub;
  return (
    <Row>
      <NameCell>
        <Gutter $w={indented ? 93 : 64} $pad={item.sub === "open" ? 42 : 0}>
          {item.sub === "open" ? <ChevRight /> : <span />}
          {iconFor(item.icon)}
        </Gutter>
        <Name $tone={tone}>{item.name}</Name>
      </NameCell>
      {item.vals.map((v, i) => (
        <Value key={i} $tone={tone} $hl={i === 0 && item.hl}>
          {v}
        </Value>
      ))}
    </Row>
  );
};

export default function App() {
  return (
    <Page>
      <Global />
      <Behind $x={935} $y={712} $size={30} $color="#d8d8d8">PLAY A ROUND OF GWENT!</Behind>
      <Behind $x={998} $y={972} $size={20} $color="#8c7cc4">Read more</Behind>
      <Behind $x={650} $y={1212} $size={24} $color="#cfcfcf">Welcome to Nexus Mods for The Witcher 3 Wild Hunt</Behind>
      <Behind $x={1846} $y={1206} $size={26} $color="#d8d8d8">The Witc</Behind>

      <GraphColumn>
        {graphs.map((g, i) => (
          <GraphWindow key={i} $h={g.h} $gap={g.gap}>
            <TitleBar $right={21}>
              <AppIcon />
              {g.title}
              <CloseX />
            </TitleBar>
            <Body>
              <Chart
                x0={22}
                y0={g.chartTop}
                w={1774}
                h={g.h - 52}
                phase={g.phase}
                line={g.line}
                fill={g.fill}
                stroke={g.stroke}
                keys={g.keys}
                spikes={g.spikes}
                seed={i * 7919 + 137}
                step={g.step}
              />
              <Side g={g} lead={5} swatchTop={g.swatchTop} />
            </Body>
          </GraphWindow>
        ))}
      </GraphColumn>

      <FloatingWindow>
        <TitleBar $right={23}>
          <AppIcon />
          Remaining Capacity
          <CloseX />
        </TitleBar>
        <Body>
          <Chart
            x0={32}
            y0={142}
            w={891}
            h={244}
            phase={12.5}
            line="#ff0000"
            fill="#ff9696"
            stroke={1.8}
            seed={11}
            keys={[
              [32, 175],
              [64, 175],
              [64, 176],
              [106, 176],
              [106, 177],
              [151, 177],
              [151, 178],
              [193, 178],
              [193, 179],
              [242, 179],
              [242, 180],
              [284, 180],
              [284, 181],
              [326, 181],
              [326, 182],
              [370, 182],
              [370, 183],
              [419, 183],
              [419, 184],
              [457, 184],
              [457, 185],
              [575, 185],
              [575, 184],
              [923, 184],
            ]}
          />
          <Side g={{ max: "80", cur: "66.456 Wh", min: "0", swatch: "#ff0000" }} lead={6} swatchTop={48} />
        </Body>
      </FloatingWindow>

      <Tip>
        63.5 °C
        <br />
        15:03:39
      </Tip>

      <Caption>Gaming - Witcher 3 - Standard mode, 90W USB-C power</Caption>

      <SensorWindow>
        <SensorTitle>
          <AppIcon />
          HWiNFO32 v7.36-4960 Sensor Status [209 values hidden]
          <WindowControls>
            <svg width="14" height="14" viewBox="0 0 14 14">
              <path d="M0 7.5H14" stroke="#222" strokeWidth="1.2" />
            </svg>
            <svg width="14" height="14" viewBox="0 0 14 14">
              <rect x="0.75" y="0.75" width="12.5" height="12.5" rx="1.5" fill="none" stroke="#222" strokeWidth="1.3" />
            </svg>
            <svg width="14" height="14" viewBox="0 0 14 14">
              <path d="M0.5 0.5L13.5 13.5M13.5 0.5L0.5 13.5" stroke="#222" strokeWidth="1.2" />
            </svg>
          </WindowControls>
        </SensorTitle>
        <TableArea>
          <Table>
            <HeaderRow>
              <HeaderCell $left>Sensor</HeaderCell>
              <HeaderCell>Current</HeaderCell>
              <HeaderCell>Minimum</HeaderCell>
              <HeaderCell>Maximum</HeaderCell>
              <HeaderCell>Average</HeaderCell>
            </HeaderRow>
            {sensors.map((item, i) => (
              <SensorRow key={i} item={item} index={i} />
            ))}
          </Table>
          <ScrollTrack>
            <ScrollThumb />
          </ScrollTrack>
        </TableArea>
        <HScroll>
          <HThumb />
        </HScroll>
        <Footer>
          <ToolButton>
            <Arrows out />
          </ToolButton>
          <ToolButton $faded>
            <Arrows out={false} />
          </ToolButton>
          <ToolButton $lead={196}>
            <ScanIcon />
          </ToolButton>
          <ToolRight>
            <Elapsed>0:04:55</Elapsed>
            <ToolButton $focus>
              <BigClock />
            </ToolButton>
            <ToolButton>
              <SheetIcon />
            </ToolButton>
            <ToolButton>
              <Gear />
            </ToolButton>
            <ToolButton>
              <BlueX />
            </ToolButton>
          </ToolRight>
        </Footer>
      </SensorWindow>
    </Page>
  );
}
